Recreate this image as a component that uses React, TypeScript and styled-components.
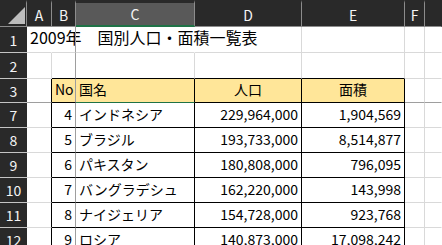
import React from "react";
import styled, { createGlobalStyle } from "styled-components";

const GRID = "#d9d9d9";
const FREEZE = "#9e9e9e";
const INK = "#000000";
const GREEN = "#1f7246";
const HEAD_BG = "#292929";
const HEAD_LINE = "#8c8c8c";
const GOLD = "#ffe699";

const GlobalStyle = createGlobalStyle`
  html, body {
    margin: 0;
    padding: 0;
    background: #ffffff;
  }
  body {
    font-family: "Noto Sans CJK JP", "Liberation Sans", sans-serif;
  }
`;

const Sheet = styled.div`
  display: grid;
  grid-template-columns: 27px 25px 24px 119px 107px 103px 20px 1fr;
  grid-template-rows: 27px 26px 26px 24px repeat(6, 25px);
  width: 442px;
  height: 245px;
  overflow: hidden;
  background: #ffffff;
`;

const Corner = styled.div`
  box-sizing: border-box;
  background: ${HEAD_BG};
  border-bottom: 1px solid ${HEAD_LINE};
  border-right: 1px solid ${HEAD_LINE};
  border-top: 3px solid ${HEAD_BG};

  svg {
    display: block;
  }
`;

const ColHead = styled.div<{ $active?: boolean; $last?: boolean }>`
  box-sizing: border-box;
  display: flex;
  align-items: center;
  justify-content: center;
  background: ${(p) => (p.$active ? "#595959" : HEAD_BG)};
  border-top: 3px solid ${HEAD_BG};
  border-right: 1px solid ${(p) => (p.$last ? "transparent" : HEAD_LINE)};
  border-bottom: ${(p) => (p.$active ? `2px solid ${GREEN}` : `1px solid ${HEAD_LINE}`)};
  color: #f4f4f4;
  font-size: 14px;
`;

const RowHead = styled.div`
  box-sizing: border-box;
  display: flex;
  align-items: center;
  justify-content: center;
  background: ${HEAD_BG};
  border-bottom: 1px solid #c4c4c4;
  color: #f4f4f4;
  font-size: 14px;
`;

type Align = "left" | "center" | "right";

const Cell = styled.div<{
  $right: string;
  $bottom: string;
  $fill?: string;
  $align?: Align;
}>`
  box-sizing: border-box;
  display: flex;
  align-items: flex-end;
  justify-content: ${(p) =>
    p.$align === "right" ? "flex-end" : p.$align === "center" ? "center" : "flex-start"};
  min-width: 0;
  padding: 0 3px 3px;
  border-right: 1px solid ${(p) => p.$right};
  border-bottom: 1px solid ${(p) => p.$bottom};
  background: ${(p) => p.$fill ?? "transparent"};
  color: #000000;
  font-size: 14px;
  white-space: nowrap;
`;

const Title = styled.span`
  font-size: 16px;
  overflow: visible;
`;

type RowKind = "title" | "blank" | "head" | "data";

type RowDef = {
  n: number;
  kind: RowKind;
  values?: string[];
};

const COLUMNS = ["A", "B", "C", "D", "E", "F", ""];

const COUNTRIES = [
  ["4", "インドネシア", "229,964,000", "1,904,569"],
  ["5", "ブラジル", "193,733,000", "8,514,877"],
  ["6", "パキスタン", "180,808,000", "796,095"],
  ["7", "バングラデシュ", "162,220,000", "143,998"],
  ["8", "ナイジェリア", "154,728,000", "923,768"],
  ["9", "ロシア", "140,873,000", "17,098,242"],
];

const ROWS: RowDef[] = [
  { n: 1, kind: "title" },
  { n: 2, kind: "blank" },
  { n: 3, kind: "head", values: ["No", "国名", "人口", "面積"] },
  ...COUNTRIES.map((values, i) => ({ n: 7 + i, kind: "data" as RowKind, values })),
];

const isTable = (kind: RowKind) => kind === "head" || kind === "data";
const inTableCol = (ci: number) => ci >= 1 && ci <= 4;

function rightColor(kind: RowKind, ci: number) {
  if (ci === 1) return FREEZE;
  if (ci === 6) return "transparent";
  if (isTable(kind) && (ci === 0 || ci === 2 || ci === 3 || ci === 4)) return INK;
  if (kind === "title" && (ci === 0 || ci === 2)) return "transparent";
  return GRID;
}

function bottomColor(kind: RowKind, ci: number) {
  if (kind === "blank" && inTableCol(ci)) return INK;
  if (kind === "head") {
    if (ci === 2) return GREEN;
    return inTableCol(ci) ? INK : FREEZE;
  }
  if (kind === "data" && inTableCol(ci)) return INK;
  return GRID;
}

function alignFor(kind: RowKind, ci: number): Align {
  if (kind === "head") return ci === 3 || ci === 4 ? "center" : "left";
  if (kind === "data") return ci === 2 ? "left" : "right";
  return "left";
}

const App = () => {
  return (
    <>
      <GlobalStyle />
      <Sheet>
        <Corner>
          <svg width="26" height="23" viewBox="0 0 26 23">
            <polygon points="8,21 25,21 25,4" fill="#bdbdbd" />
          </svg>
        </Corner>
        {COLUMNS.map((c, i) => (
          <ColHead key={c || "g"} $active={c === "C"} $last={i === COLUMNS.length - 1}>
            {c}
          </ColHead>
        ))}

        {ROWS.map((row) => (
          <React.Fragment key={row.n}>
            <RowHead>{row.n}</RowHead>
            {COLUMNS.map((c, ci) => {
              let content: React.ReactNode = null;
              if (row.kind === "title" && ci === 0) {
                content = <Title>2009年　国別人口・面積一覧表</Title>;
              } else if (row.values && inTableCol(ci)) {
                content = row.values[ci - 1];
              }
              return (
                <Cell
                  key={c || "g"}
                  $right={rightColor(row.kind, ci)}
                  $bottom={bottomColor(row.kind, ci)}
                  $fill={row.kind === "head" && inTableCol(ci) ? GOLD : undefined}
                  $align={alignFor(row.kind, ci)}
                >
                  {content}
                </Cell>
              );
            })}
          </React.Fragment>
        ))}
      </Sheet>
    </>
  );
};

export default App;
